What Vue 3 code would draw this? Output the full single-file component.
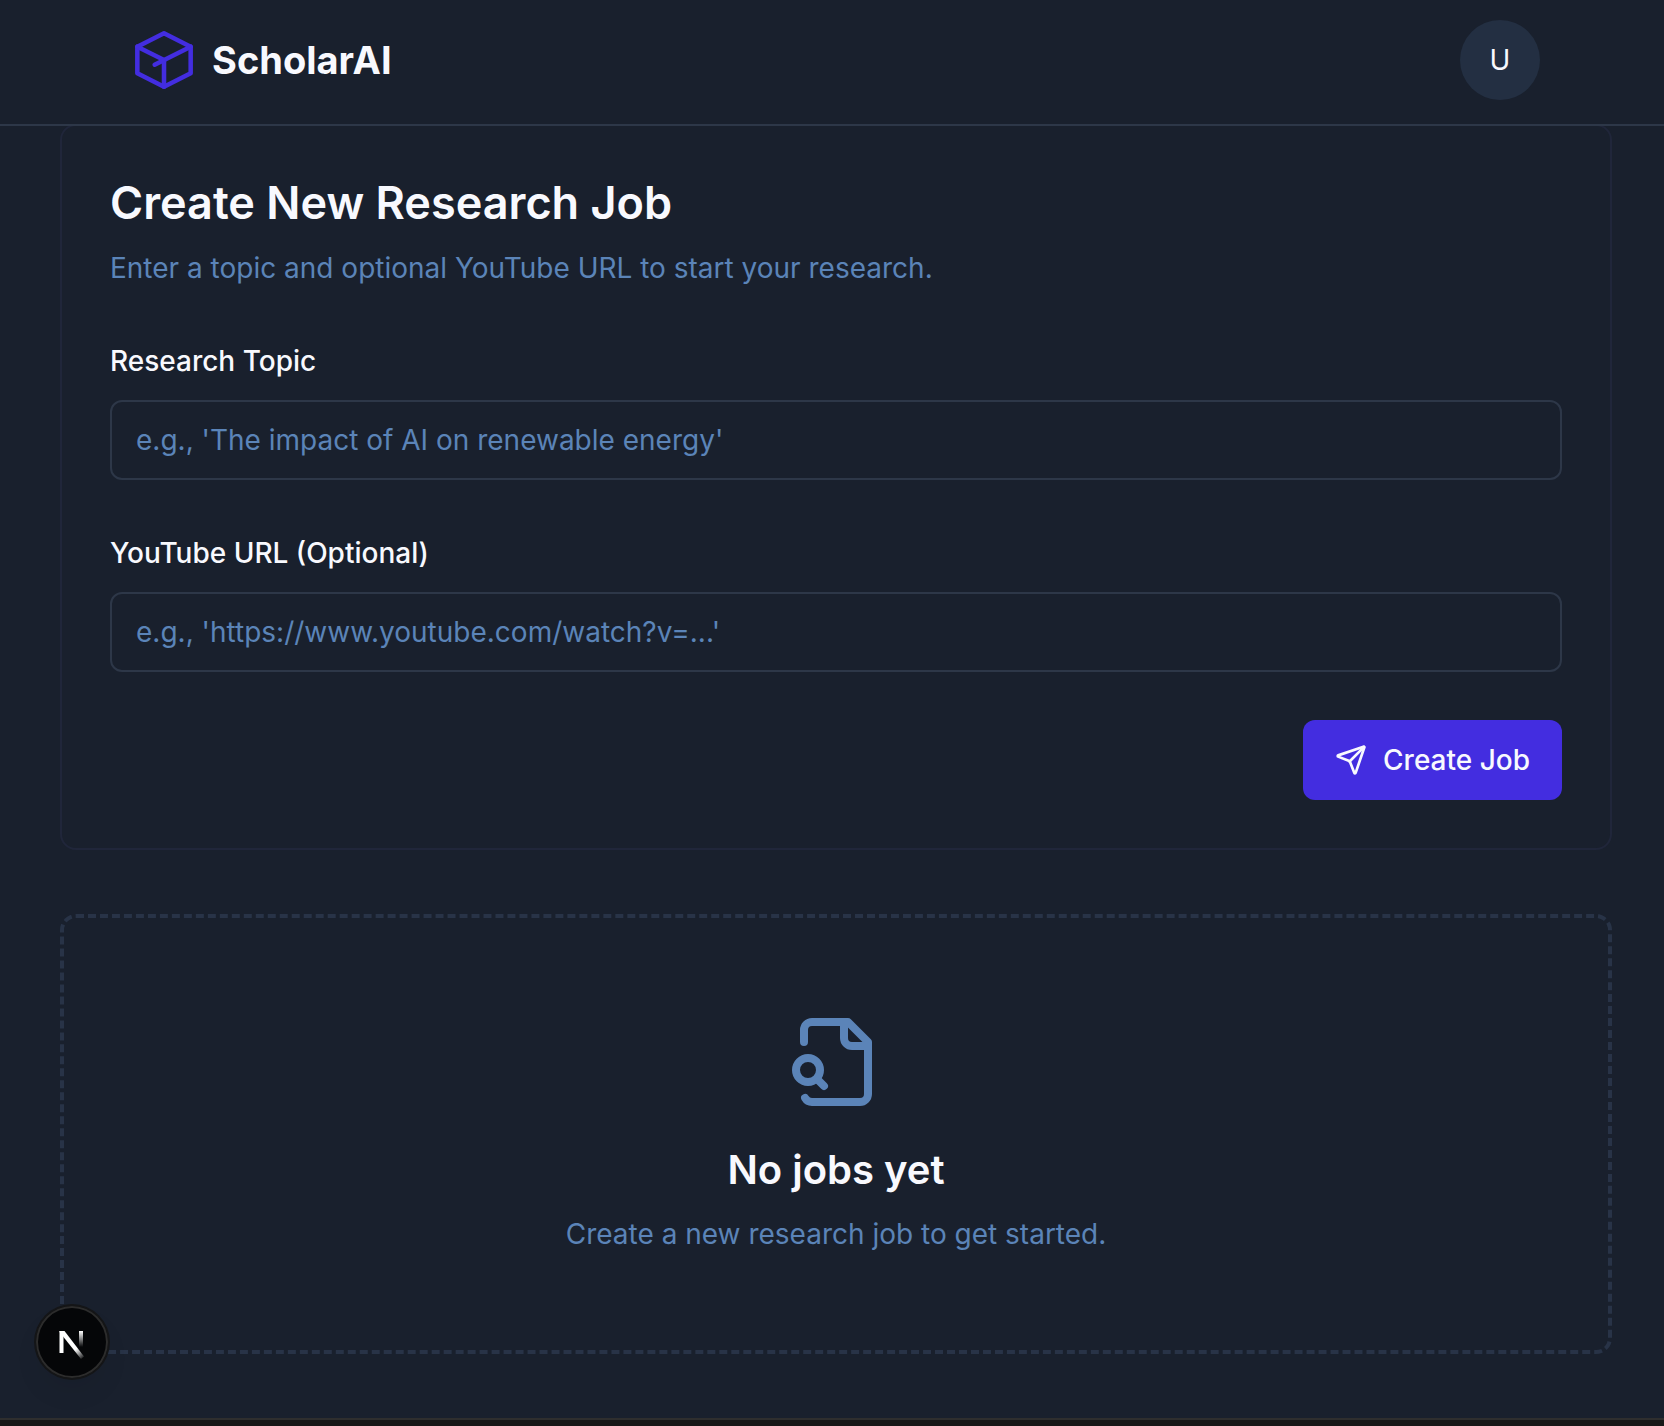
<script setup>
import { ref } from 'vue'

const topic = ref('')
const youtubeUrl = ref('')

function createJob() {
  topic.value = ''
  youtubeUrl.value = ''
}
</script>

<template>
  <div class="page">
    <header class="header">
      <a class="brand" href="#">
        <svg class="brand-icon" viewBox="0 0 24 24" aria-hidden="true">
          <path d="M12 2L2 7v10l10 5 10-5V7L12 2z" />
          <path d="M2 7l10 5v10" />
          <path d="M22 7L8.5 13.75" />
        </svg>
        <span class="brand-name">ScholarAI</span>
      </a>
      <button class="avatar" type="button" aria-label="User menu">U</button>
    </header>

    <main class="main">
      <section class="card">
        <h1 class="card-title">Create New Research Job</h1>
        <p class="card-text">Enter a topic and optional YouTube URL to start your research.</p>
        <form class="form" @submit.prevent="createJob">
          <div class="field">
            <label class="label" for="topic">Research Topic</label>
            <input id="topic" v-model="topic" class="input" type="text" placeholder="e.g., 'The impact of AI on renewable energy'" />
          </div>
          <div class="field">
            <label class="label" for="youtube">YouTube URL (Optional)</label>
            <input id="youtube" v-model="youtubeUrl" class="input" type="text" placeholder="e.g., 'https://www.youtube.com/watch?v=...'" />
          </div>
          <button class="submit" type="submit">
            <svg class="submit-icon" viewBox="0 0 24 24" aria-hidden="true">
              <path d="M14.536 21.686a.5.5 0 0 0 .937-.024l6.5-19a.496.496 0 0 0-.635-.635l-19 6.5a.5.5 0 0 0-.024.937l7.93 3.18a2 2 0 0 1 1.112 1.11z" />
              <path d="m21.854 2.147-10.94 10.939" />
            </svg>
            <span>Create Job</span>
          </button>
        </form>
      </section>

      <section class="empty">
        <svg class="empty-icon" viewBox="0 0 24 24" aria-hidden="true">
          <path d="M14 2v4a2 2 0 0 0 2 2h4" />
          <path d="M4.268 21a2 2 0 0 0 1.727 1H18a2 2 0 0 0 2-2V7l-5-5H6a2 2 0 0 0-2 2v3" />
          <path d="m9 18-1.5-1.5" />
          <circle cx="5" cy="14" r="3" />
        </svg>
        <h2 class="empty-title">No jobs yet</h2>
        <p class="empty-text">Create a new research job to get started.</p>
      </section>
    </main>

    <footer class="footer"></footer>

    <button class="dev-badge" type="button" aria-label="Open Next.js Dev Tools">
      <svg class="dev-icon" viewBox="0 0 72 72" aria-hidden="true">
        <defs>
          <linearGradient id="dev-diagonal" gradientUnits="userSpaceOnUse" x1="40" y1="43" x2="48" y2="53">
            <stop offset="0" stop-color="#fff" />
            <stop offset="1" stop-color="#fff" stop-opacity="0" />
          </linearGradient>
          <linearGradient id="dev-stem" gradientUnits="userSpaceOnUse" x1="45" y1="25" x2="45" y2="41">
            <stop offset="0" stop-color="#fff" />
            <stop offset="1" stop-color="#fff" stop-opacity="0" />
          </linearGradient>
        </defs>
        <rect x="23.5" y="25" width="4" height="22" fill="#fff" />
        <path d="M23.5 25h5l19.5 25.5-3 2.5L23.5 26z" fill="url(#dev-diagonal)" />
        <rect x="43" y="25" width="4" height="16" fill="url(#dev-stem)" />
      </svg>
    </button>
  </div>
</template>

<style>
body {
  margin: 0;
  background: #19202d;
}
</style>

<style scoped>
.page {
  min-height: 100vh;
  display: flex;
  flex-direction: column;
  background: #19202d;
  color: #f8f9fe;
  font-family: Inter, "Liberation Sans", sans-serif;
  font-size: 28px;
  line-height: 40px;
}

.header {
  position: sticky;
  top: 0;
  z-index: 10;
  display: flex;
  align-items: center;
  justify-content: space-between;
  padding: 20px 124px 24px 132px;
  border-bottom: 2px solid #2d3748;
  background: #19202d;
}

.brand {
  display: flex;
  align-items: center;
  gap: 16px;
  color: inherit;
  text-decoration: none;
}

.brand-icon,
.submit-icon,
.empty-icon {
  display: block;
  fill: none;
  stroke: currentColor;
  stroke-width: 2;
  stroke-linecap: round;
  stroke-linejoin: round;
}

.brand-icon {
  width: 64px;
  height: 64px;
  color: #432de0;
  stroke-width: 1.7;
}

.brand-name {
  font-size: 38px;
  font-weight: 700;
}

.avatar {
  width: 80px;
  height: 80px;
  padding: 0;
  border: 0;
  border-radius: 50%;
  background: #232f42;
  color: inherit;
  font: inherit;
}

.main {
  flex: 1;
  display: flex;
  flex-direction: column;
  gap: 64px;
  margin-top: -2px;
  padding: 0 52px 64px 60px;
}

.card {
  padding: 48px;
  border: 2px solid #20263a;
  border-radius: 16px;
}

.card-title {
  margin: 0 0 16px;
  font-size: 45px;
  font-weight: 600;
  line-height: 58px;
}

.card-text {
  margin: 0 0 48px;
  color: #5b84b8;
}

.form {
  display: flex;
  flex-direction: column;
  gap: 48px;
}

.field {
  display: flex;
  flex-direction: column;
  gap: 14px;
}

.label {
  font-weight: 500;
  line-height: 50px;
}

.input {
  box-sizing: border-box;
  width: 100%;
  height: 80px;
  padding: 0 24px;
  border: 2px solid #2d3748;
  border-radius: 12px;
  background: #19202d;
  color: inherit;
  font: inherit;
}

.input::placeholder {
  color: #5b84b8;
  opacity: 1;
}

.submit {
  align-self: flex-end;
  display: flex;
  align-items: center;
  gap: 16px;
  height: 80px;
  padding: 0 32px;
  border: 0;
  border-radius: 12px;
  background: #432de0;
  color: inherit;
  font: inherit;
  font-weight: 500;
}

.submit-icon {
  width: 32px;
  height: 32px;
}

.empty {
  display: flex;
  flex-direction: column;
  align-items: center;
  padding: 96px;
  border: 4px dashed #283347;
  border-radius: 16px;
}

.empty-icon {
  width: 96px;
  height: 96px;
  margin-bottom: 32px;
  color: #5b84b8;
}

.empty-title {
  margin: 0 0 16px;
  font-size: 40px;
  font-weight: 600;
  line-height: 56px;
}

.empty-text {
  margin: 0;
  color: #5b84b8;
}

.footer {
  height: 6px;
  border-top: 2px solid #2e2e2e;
  background: #171717;
}

.dev-badge {
  position: fixed;
  left: 36px;
  bottom: 48px;
  width: 72px;
  height: 72px;
  padding: 0;
  border: 0;
  border-radius: 50%;
  background: #050608;
  box-shadow: inset 0 0 0 2px #2c2c2c, 0 0 0 2px #141517, 0 16px 32px -8px rgba(0, 0, 0, 0.1);
}

.dev-icon {
  display: block;
  width: 72px;
  height: 72px;
}
</style>
